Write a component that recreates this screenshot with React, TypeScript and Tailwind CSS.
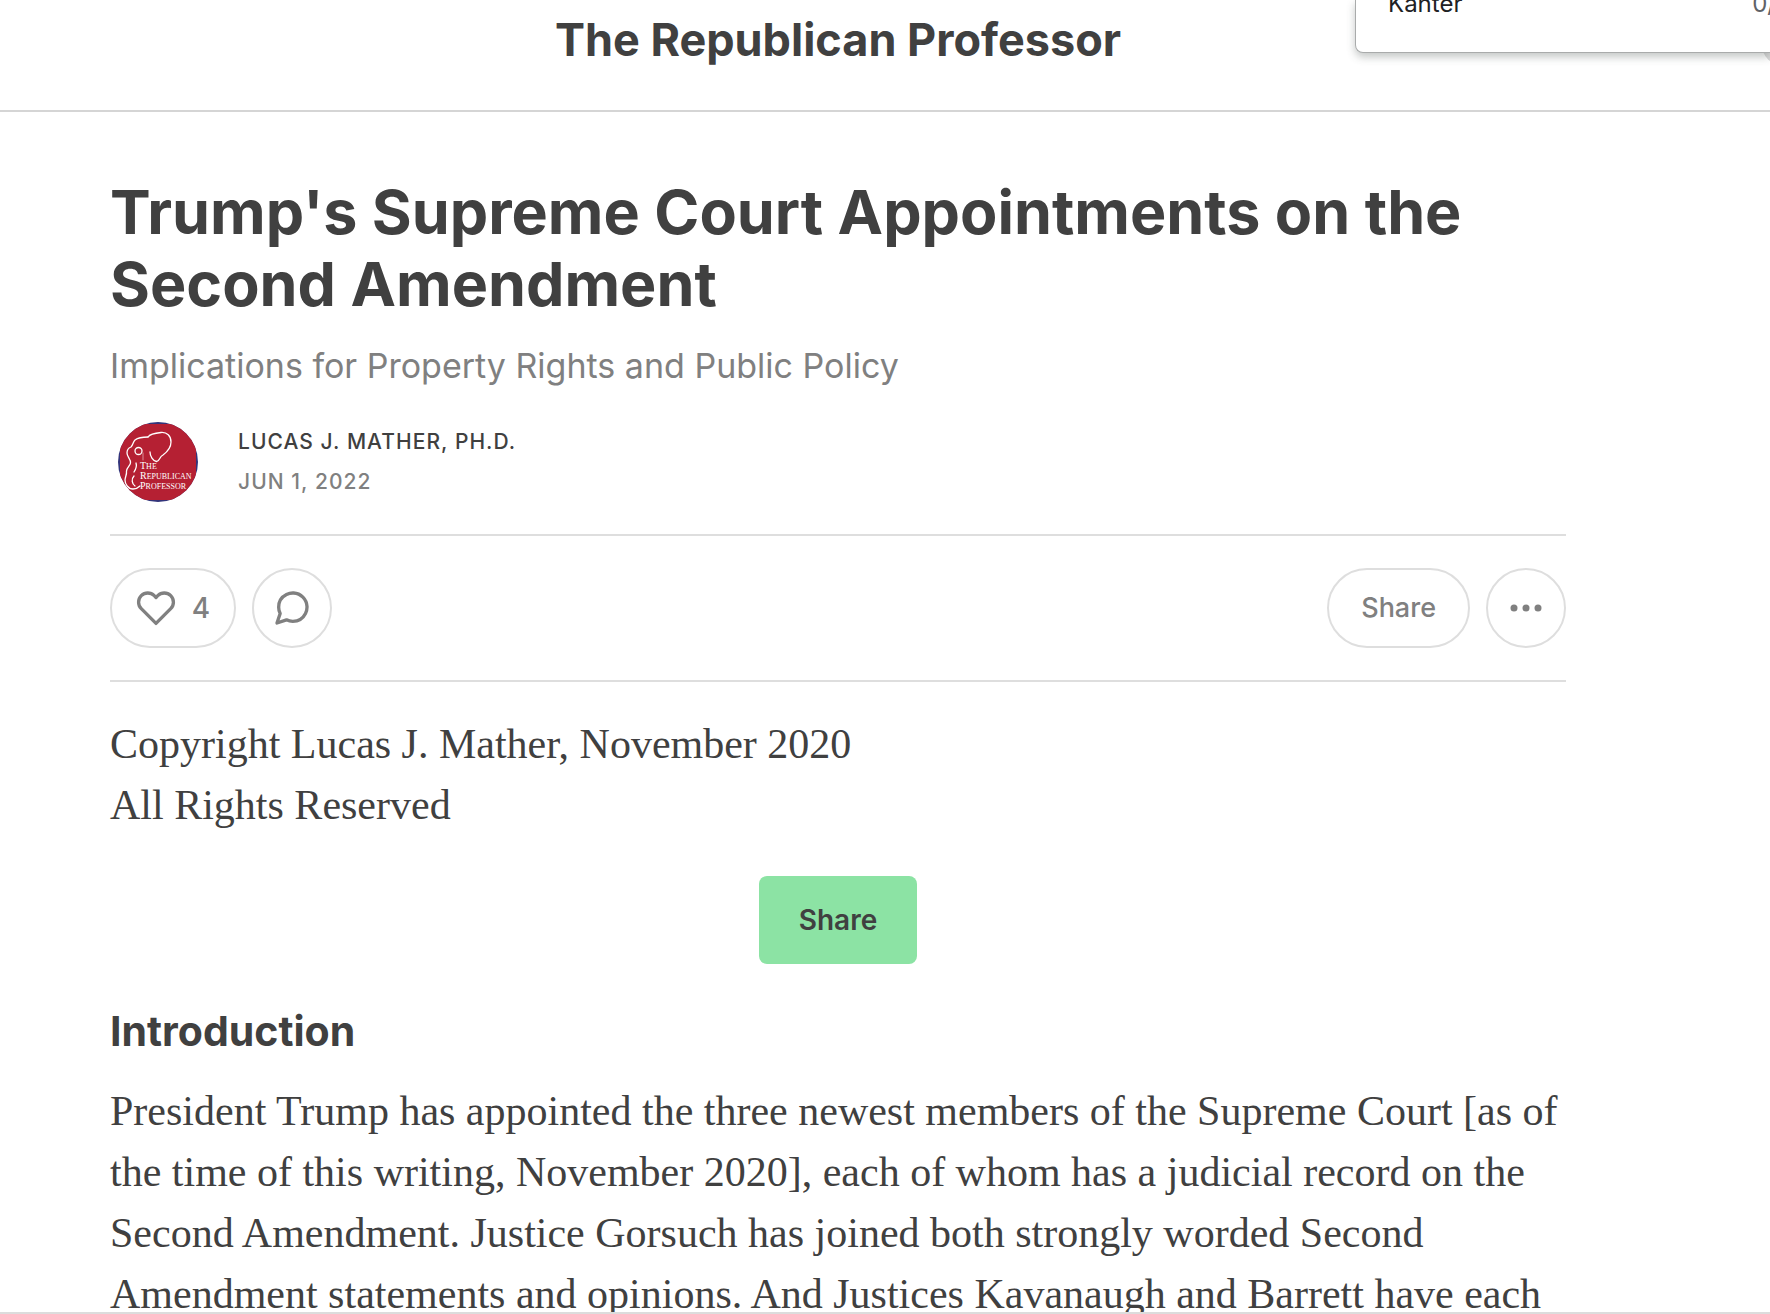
import React from "react";
import { FiHeart, FiMessageCircle } from "react-icons/fi";

function Avatar() {
  return (
    <svg viewBox="0 0 80 80" className="size-20" role="img" aria-label="The Republican Professor logo">
      <defs>
        <clipPath id="avatar-circle">
          <circle cx="40" cy="40" r="40" />
        </clipPath>
      </defs>
      <g clipPath="url(#avatar-circle)">
        <rect width="80" height="80" fill="#33347a" />
        <rect x="2" y="2" width="76" height="76" fill="#b52033" />
        <g fill="none" stroke="#ffffff" strokeWidth="1.3" strokeLinecap="round" strokeLinejoin="round">
          <path d="M30 15C26 15 21 15 17 18C15 20 15 23 13 25C10 26 9 28 9 31C9 35 13 37 12.500 41C12 44 9 45 8.500 49C9 53 7 55 7 58C7 62 10 67 15 67C18 67 20 66 22 64" />
          <path d="M30 15C32 12 38 11 43 10.500C49 10 53 14 53 20C53 26 49 30 45 33C41 35 42 39 38.500 39.500C35 39 32 34 32 30" />
          <circle cx="20.500" cy="29" r="3.500" />
          <path d="M18 41C19 44 18 47 16 50" />
          <path d="M16 54C13 57 14 62 17 64" />
          <path d="M25 31V38" strokeWidth="0.500" />
        </g>
        <g fill="#ffffff" fontFamily="'Liberation Serif', serif" fontSize="10">
          <text x="22" y="47">T<tspan fontSize="8">HE</tspan></text>
          <text x="22" y="57">R<tspan fontSize="8">EPUBLICAN</tspan></text>
          <text x="22" y="67">P<tspan fontSize="8">ROFESSOR</tspan></text>
        </g>
      </g>
    </svg>
  );
}

const pill =
  "flex h-20 items-center justify-center rounded-full border-2 border-[#dedede] text-[#808080]";

export default function App() {
  return (
    <div className="relative flex h-screen flex-col overflow-hidden border-b-2 border-[#dcdcdc] bg-white font-['Inter',sans-serif] text-[#404040]">
      <header className="h-28 shrink-0 border-b-2 border-[#d5d5d5] pr-[94px]">
        <div className="flex h-[78px] items-center justify-center">
          <a href="#" className="text-[45px] leading-none font-bold">The Republican Professor</a>
        </div>
      </header>

      <aside className="absolute top-0 right-0 h-[53px] w-[415px] overflow-visible">
        <div className="absolute -right-8 -bottom-3 size-10 rounded-full bg-[#dadada]" />
        <div className="relative flex h-full items-start justify-between rounded-bl-lg border-b border-l border-[#a9abab] bg-white pl-8 text-[24px] leading-6 shadow-[0_4px_8px_rgba(60,70,65,0.3)]">
          <span className="-mt-2 text-[#202124]">Kanter</span>
          <span className="-mt-2 -mr-1.5 text-[#5f6368]">0/</span>
        </div>
      </aside>

      <main className="pr-[94px]">
        <article className="mx-auto max-w-[1456px]">
          <h1 className="pt-16 text-[61px] leading-[72px] font-bold">
            Trump's Supreme Court Appointments on the
            <br />
            Second Amendment
          </h1>
          <p className="mt-4 text-[34px] leading-[60px] text-[#808080]">
            Implications for Property Rights and Public Policy
          </p>
          <div className="mt-[26px] flex items-center gap-10 pl-2">
            <Avatar />
            <div className="text-[21px] leading-10 font-medium uppercase tracking-wider">
              <a href="#" className="block">Lucas J. Mather, Ph.D.</a>
              <time className="block text-[#808080]">Jun 1, 2022</time>
            </div>
          </div>

          <div className="mt-8 flex items-center gap-4 border-y-2 border-[#dedede] py-8">
            <button className={`${pill} w-[126px] gap-4 text-[28px] font-medium`} aria-label="Like, 4 likes">
              <FiHeart className="size-10" />
              <span>4</span>
            </button>
            <button className={`${pill} w-20`} aria-label="Comment">
              <FiMessageCircle className="size-10" />
            </button>
            <button className={`${pill} ml-auto px-8 text-[27px] font-medium`}>Share</button>
            <button className={`${pill} w-20`} aria-label="More">
              <svg viewBox="0 0 32 8" className="h-2 w-8" fill="currentColor">
                <circle cx="4" cy="4" r="3.5" />
                <circle cx="16" cy="4" r="3.5" />
                <circle cx="28" cy="4" r="3.5" />
              </svg>
            </button>
          </div>

          <div className="mt-8 font-['Liberation_Serif',serif] text-[42px] leading-[61px]">
            <p>
              Copyright Lucas J. Mather, November 2020
              <br />
              All Rights Reserved
            </p>
          </div>

          <div className="mt-10 flex justify-center">
            <button className="h-[88px] rounded-lg bg-[#8ce3a4] px-10 text-[28px] font-semibold">Share</button>
          </div>

          <h2 className="mt-[41px] text-[41px] leading-[52px] font-bold">Introduction</h2>
          <p className="mt-6 font-['Liberation_Serif',serif] text-[42px] leading-[61px] whitespace-nowrap">
            President Trump has appointed the three newest members of the Supreme Court [as of
            <br />
            the time of this writing, November 2020], each of whom has a judicial record on the
            <br />
            Second Amendment. Justice Gorsuch has joined both strongly worded Second
            <br />
            Amendment statements and opinions. And Justices Kavanaugh and Barrett have each
          </p>
        </article>
      </main>
    </div>
  );
}
